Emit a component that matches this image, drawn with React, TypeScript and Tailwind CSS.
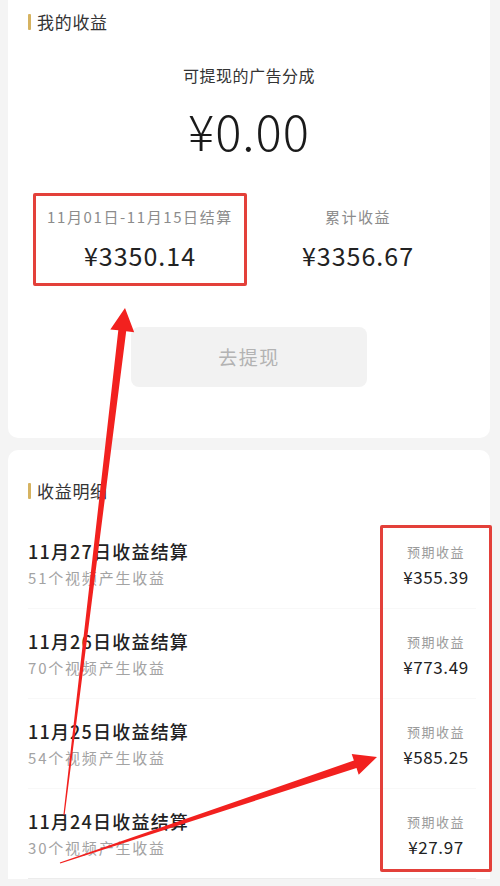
import React from 'react'

const rows = [
  { date: '11月27日收益结算', videos: '51个视频产生收益', amount: '¥355.39' },
  { date: '11月26日收益结算', videos: '70个视频产生收益', amount: '¥773.49' },
  { date: '11月25日收益结算', videos: '54个视频产生收益', amount: '¥585.25' },
  { date: '11月24日收益结算', videos: '30个视频产生收益', amount: '¥27.97' },
]

function SectionTitle({ text }: { text: string }) {
  return (
    <div className="flex h-[24px] items-center gap-[6px]">
      <span className="h-[16px] w-[3px] rounded-[1px] bg-[#d6b361]" />
      <span className="text-[17px] leading-[24px] tracking-[0.7px] text-[#333]">{text}</span>
    </div>
  )
}

function Arrows() {
  return (
    <svg
      className="pointer-events-none absolute left-0 top-0 z-10"
      width={500}
      height={886}
      viewBox="0 0 500 886"
    >
      {/* arrow up to the settlement box */}
      <polygon
        fill="#f2211f"
        points="63.4,814.9 118.3,330.3 110.3,329.4 125,308 134.2,332.2 126.2,331.3 64.6,815.1"
      />
      {/* arrow right to the expected income box */}
      <polygon
        fill="#f2211f"
        points="59.8,862.5 353.9,760.5 351.7,753.9 377,757 358.7,774.7 356.5,768.1 60.2,863.5"
      />
    </svg>
  )
}

export default function App() {
  return (
    <div className="relative h-[886px] w-[500px] overflow-hidden bg-[#f4f4f4] font-['Noto_Sans_CJK_SC','Noto_Sans',sans-serif]">
      {/* 我的收益 */}
      <section className="ml-[8px] h-[438px] w-[482px] rounded-b-[10px] bg-white px-[20px] pt-[10px]">
        <SectionTitle text="我的收益" />

        <p className="mt-[30px] text-center text-[16px] leading-[22px] tracking-[0.5px] text-[#333]">
          可提现的广告分成
        </p>
        <p className="mt-[14px] text-center text-[49px] font-light leading-[60px] tracking-[1px] text-[#1a1a1a]">
          ¥0.00
        </p>

        <div className="mt-[33px] grid grid-cols-2 px-[3px]">
          <div className="mx-[2px] flex h-[93px] flex-col items-center rounded-[2px] border-[3px] border-[#e3403a] pt-[11px]">
            <span className="text-[15px] leading-[20px] tracking-[1.6px] text-[#8c8c8c]">11月01日-11月15日结算</span>
            <span className="mt-[12px] text-[25px] leading-[32px] tracking-[1px] text-[#222]">¥3350.14</span>
          </div>
          <div className="mx-[2px] flex h-[93px] flex-col items-center border-[3px] border-transparent pt-[11px]">
            <span className="text-[15px] leading-[20px] tracking-[1.5px] text-[#8c8c8c]">累计收益</span>
            <span className="mt-[12px] text-[25px] leading-[32px] tracking-[1px] text-[#222]">¥3356.67</span>
          </div>
        </div>

        <button className="mx-auto mt-[41px] flex h-[60px] w-[236px] items-center justify-center rounded-[8px] bg-[#f2f2f2] text-[19px] tracking-[1.5px] text-[#b3b3b3]">
          去提现
        </button>
      </section>

      {/* 收益明细 */}
      <section className="relative ml-[8px] mt-[12px] w-[482px] rounded-t-[10px] bg-white pl-[20px] pr-[14px] pt-[29px]">
        <SectionTitle text="收益明细" />

        <div className="mt-[16px]">
          {rows.map((row, i) => (
            <div
              key={row.date}
              className={
                i === rows.length - 1
                  ? 'flex h-[90px] items-center justify-between border-b border-[#ececec]'
                  : 'flex h-[90px] items-center justify-between border-b border-[#f8f8f8]'
              }
            >
              <div className="flex flex-col">
                <span className="text-[18px] font-medium leading-[24px] tracking-[1.2px] text-[#222]">{row.date}</span>
                <span className="mt-[4px] text-[15px] leading-[22px] tracking-[1.8px] text-[#a3a3a3]">{row.videos}</span>
              </div>
              <div className="flex w-[80px] flex-col items-center pt-[4px]">
                <span className="text-[13px] leading-[20px] tracking-[1.5px] text-[#9a9a9a]">预期收益</span>
                <span className="mt-[2px] text-[17px] leading-[26px] tracking-[0.6px] text-[#222]">{row.amount}</span>
              </div>
            </div>
          ))}
        </div>
      </section>

      {/* annotation box around the expected income column */}
      <div className="pointer-events-none absolute left-[380px] top-[525px] h-[347px] w-[112px] rounded-[2px] border-[3px] border-[#e3403a]" />

      <Arrows />
    </div>
  )
}
